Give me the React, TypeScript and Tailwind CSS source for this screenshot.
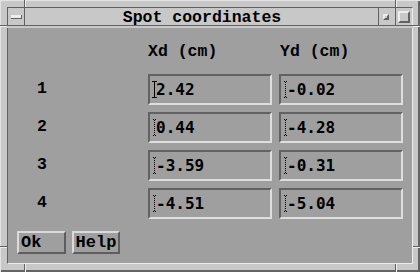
import React from "react";

const mono = { fontFamily: '"Liberation Mono", "Courier New", monospace' };
const sansMono = { fontFamily: '"DejaVu Sans Mono", monospace' };

function SolidCaret() {
  return (
    <svg width="5" height="17" viewBox="0 0 5 17" className="absolute left-[2px] top-[5px]" shapeRendering="crispEdges">
      <rect x="0" y="0" width="5" height="1" fill="#000" />
      <rect x="2" y="0" width="1" height="17" fill="#000" />
      <rect x="0" y="16" width="5" height="1" fill="#000" />
    </svg>
  );
}

function DottedCaret() {
  const dots: React.ReactElement[] = [];
  for (let y = 1; y < 16; y += 2) dots.push(<rect key={y} x="1" y={y} width="1" height="1" fill="#000" />);
  return (
    <svg width="3" height="17" viewBox="0 0 3 17" className="absolute left-[3px] top-[5px]" shapeRendering="crispEdges">
      <rect x="0" y="0" width="1" height="1" fill="#000" />
      <rect x="2" y="0" width="1" height="1" fill="#000" />
      {dots}
      <rect x="0" y="16" width="1" height="1" fill="#000" />
      <rect x="2" y="16" width="1" height="1" fill="#000" />
    </svg>
  );
}

function Field({ value, active }: { value: string; active?: boolean }) {
  return (
    <div className="relative h-[31px] border-2 border-t-[#626262] border-l-[#626262] border-b-[#dedede] border-r-[#dedede] bg-[#9f9f9f] flex items-center pl-[6px]">
      {active ? <SolidCaret /> : <DottedCaret />}
      <span className="text-[16px] leading-[18px] font-bold text-black" style={sansMono}>
        {value}
      </span>
    </div>
  );
}

const rows = [
  ["1", "2.42", "-0.02"],
  ["2", "0.44", "-4.28"],
  ["3", "-3.59", "-0.31"],
  ["4", "-4.51", "-5.04"],
];

export default function App() {
  return (
    <div className="relative w-[420px] h-[272px] bg-[#c8c8c8] shadow-[inset_1px_1px_0_#e4e4e4,inset_-2px_-2px_0_#646464] pt-[7px] pl-[7px] pr-[7px] pb-[8px] flex flex-col overflow-hidden">
      {/* title bar */}
      <div className="flex h-[19px] border border-t-[#626262] border-l-[#626262] border-b-[#626262] border-r-[#ececec] bg-[#c8c8c8]">
        <div className="relative w-[16px]">
          <div className="absolute left-[3px] top-[7px] w-[11px] h-[4px] bg-[#ececec] border-b border-r border-[#626262]" />
        </div>
        <div className="w-[2px]" />
        <div className="flex-1 flex items-center justify-center pt-[1px]">
          <span className="text-[16.5px] leading-[17px] font-bold text-black" style={mono}>
            Spot coordinates
          </span>
        </div>
        <div className="w-px bg-[#626262]" />
        <div className="relative w-[16px]">
          <div className="absolute left-[4px] top-[6px] w-[6px] h-[6px] border-2 border-t-[#ececec] border-l-[#ececec] border-b-[#626262] border-r-[#626262]" />
        </div>
        <div className="w-px" />
        <div className="relative w-[16px]">
          <div className="absolute left-[2px] top-[3px] w-[12px] h-[12px] border-2 border-t-[#ececec] border-l-[#ececec] border-b-[#626262] border-r-[#626262]" />
        </div>
      </div>

      {/* client */}
      <div className="mt-[2px] flex-1 flex flex-col border-l border-r border-b border-l-[#626262] border-r-[#ececec] border-b-[#ececec] bg-[#9f9f9f] pt-[15px]">
        <div className="grid grid-cols-[133px_124px_124px] gap-x-[7px]">
          <div />
          <div className="h-[18px] leading-[18px] text-[16.5px] font-bold text-black" style={mono}>
            Xd (cm)
          </div>
          <div className="h-[18px] leading-[18px] text-[16.5px] font-bold text-black pl-[1px]" style={mono}>
            Yd (cm)
          </div>
        </div>
        <div className="mt-[13px] grid grid-cols-[133px_124px_124px] gap-x-[7px] gap-y-[7px]">
          {rows.map(([n, x, y], i) => (
            <React.Fragment key={n}>
              <div className="flex items-center pl-[29px] text-[16.5px] font-bold text-black" style={mono}>
                {n}
              </div>
              <Field value={x} active={i === 0} />
              <Field value={y} />
            </React.Fragment>
          ))}
        </div>
        <div className="mt-[12px] flex gap-[6px] pl-[9px]">
          <div className="w-[49px] h-[23px] border-2 border-t-[#dadada] border-l-[#dadada] border-b-[#5e5e5e] border-r-[#5e5e5e] flex items-center pl-[2px] text-[17px] leading-[19px] font-bold text-black" style={mono}>
            Ok
          </div>
          <div className="w-[48px] h-[23px] border-2 border-t-[#dadada] border-l-[#dadada] border-b-[#5e5e5e] border-r-[#5e5e5e] flex items-center justify-center text-[17px] leading-[19px] font-bold text-black" style={mono}>
            Help
          </div>
        </div>
      </div>

      {/* frame corner marks */}
      <div className="absolute left-[24px] top-0 w-px h-[26px] bg-[#626262]" />
      <div className="absolute left-[25px] top-0 w-px h-[7px] bg-[#ececec]" />
      <div className="absolute left-[395px] top-0 w-px h-[26px] bg-[#626262]" />
      <div className="absolute left-[396px] top-0 w-px h-[7px] bg-[#ececec]" />
      <div className="absolute left-0 top-[25px] w-[8px] h-px bg-[#626262]" />
      <div className="absolute left-0 top-[26px] w-[7px] h-px bg-[#ececec]" />
      <div className="absolute left-[412px] top-[25px] w-[8px] h-px bg-[#626262]" />
      <div className="absolute left-[413px] top-[26px] w-[7px] h-px bg-[#ececec]" />
      <div className="absolute left-0 top-[246px] w-[7px] h-px bg-[#626262]" />
      <div className="absolute left-0 top-[247px] w-[7px] h-px bg-[#ececec]" />
      <div className="absolute left-[413px] top-[246px] w-[7px] h-px bg-[#626262]" />
      <div className="absolute left-[413px] top-[247px] w-[7px] h-px bg-[#ececec]" />
      <div className="absolute left-[24px] top-[264px] w-px h-[8px] bg-[#626262]" />
      <div className="absolute left-[25px] top-[264px] w-px h-[8px] bg-[#ececec]" />
      <div className="absolute left-[395px] top-[264px] w-px h-[8px] bg-[#626262]" />
      <div className="absolute left-[396px] top-[264px] w-px h-[8px] bg-[#ececec]" />
    </div>
  );
}
